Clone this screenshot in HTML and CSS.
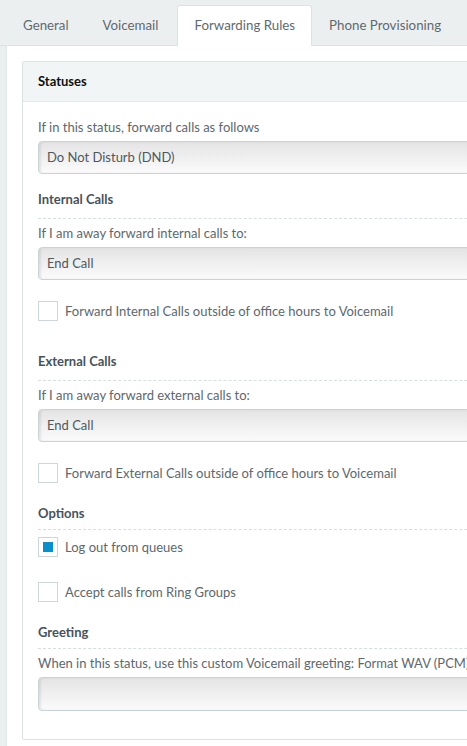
FILE: index.html
```html
<!DOCTYPE html>
<html>
<head>
<meta charset="utf-8">
<link rel="stylesheet" href="styles.css">
</head>
<body>
<nav class="tabs">
  <div class="tab">General</div>
  <div class="tab">Voicemail</div>
  <div class="tab tab-active">Forwarding Rules</div>
  <div class="tab">Phone Provisioning</div>
</nav>
<main class="panel">
  <section class="card">
    <header class="card-head">Statuses</header>
    <div class="card-body">
      <div class="label">If in this status, forward calls as follows</div>
      <div class="select">Do Not Disturb (DND)</div>

      <div class="heading heading-internal">Internal Calls</div>
      <div class="label">If I am away forward internal calls to:</div>
      <div class="select">End Call</div>
      <label class="check check-first">
        <span class="box"></span>
        <span>Forward Internal Calls outside of office hours to Voicemail</span>
      </label>

      <div class="heading heading-external">External Calls</div>
      <div class="label">If I am away forward external calls to:</div>
      <div class="select">End Call</div>
      <label class="check check-first">
        <span class="box"></span>
        <span>Forward External Calls outside of office hours to Voicemail</span>
      </label>

      <div class="heading heading-options">Options</div>
      <label class="check check-opt">
        <span class="box box-checked"></span>
        <span>Log out from queues</span>
      </label>
      <label class="check check-second">
        <span class="box"></span>
        <span>Accept calls from Ring Groups</span>
      </label>

      <div class="heading heading-greeting">Greeting</div>
      <div class="label">When in this status, use this custom Voicemail greeting: Format WAV (PCM), 8 KHz, 16 bit, Mono</div>
      <div class="select select-empty"></div>
    </div>
  </section>
</main>
</body>
</html>
```

FILE: styles.css
```css
html, body {
  margin: 0;
  padding: 0;
  overflow: hidden;
}
body {
  background: #eceff0;
  font-family: Lato, "Noto Sans", sans-serif;
  font-size: 13px;
  color: #5d686d;
  width: 700px;
}
.tabs {
  display: flex;
  align-items: flex-end;
  height: 45px;
  padding-left: 6px;
  border-bottom: 1px solid #dde2e3;
}
.tab {
  padding: 0 16px;
  height: 40px;
  line-height: 39px;
  font-size: 13.3px;
  color: #5f6a70;
  box-sizing: border-box;
  border: 1px solid transparent;
  border-bottom: none;
}
.tab-active {
  background: #fff;
  border-color: #dde3e4;
  border-radius: 3px 3px 0 0;
  height: 41px;
  margin-bottom: -1px;
  margin-left: 2px;
}
.panel {
  margin-left: 6px;
  background: #fff;
  border-left: 1px solid #e2e7e8;
  padding: 15px 0 0 15px;
  height: 800px;
}
.card {
  width: 640px;
  border: 1px solid #dde3e4;
  border-radius: 2px;
}
.card-head {
  height: 39px;
  line-height: 39px;
  background: #f2f5f5;
  border-bottom: 1px solid #e2e7e8;
  padding-left: 15px;
  font-weight: bold;
  color: #111;
}
.card-body {
  padding: 16px 15px 28px;
}
.label {
  line-height: 18px;
  margin-bottom: 5px;
  white-space: nowrap;
}
.select {
  height: 33px;
  box-sizing: border-box;
  border: 1px solid #cad4d6;
  border-radius: 4px;
  background: linear-gradient(#e4e4e4, #fbfbfb);
  box-shadow: inset 2px 0 2px rgba(0, 0, 0, 0.08);
  padding-left: 8px;
  line-height: 31px;
  color: #4e585d;
}
.select-empty {
  height: 34px;
}
.heading {
  font-weight: bold;
  color: #47535a;
  line-height: 18px;
  border-bottom: 1px dashed #d7dee0;
}
.heading + .label {
  margin-top: 5px;
}
.heading-internal {
  margin-top: 16px;
  padding-bottom: 10px;
}
.heading-external {
  margin-top: 31px;
  padding-bottom: 10px;
}
.heading-options {
  margin-top: 21px;
  padding-bottom: 7px;
}
.heading-greeting {
  margin-top: 21px;
  padding-bottom: 7px;
}
.check {
  display: flex;
  align-items: center;
  gap: 7px;
  height: 20px;
  white-space: nowrap;
}
.check-first {
  margin-top: 21px;
}
.check-opt {
  margin-top: 7px;
}
.check-second {
  margin-top: 25px;
}
.box {
  width: 20px;
  height: 20px;
  box-sizing: border-box;
  border: 1px solid #cdd6d8;
  background: #fff;
  display: flex;
  align-items: center;
  justify-content: center;
  flex: none;
}
.box-checked::after {
  content: "";
  width: 10px;
  height: 10px;
  background: #0a8fcb;
}
```
